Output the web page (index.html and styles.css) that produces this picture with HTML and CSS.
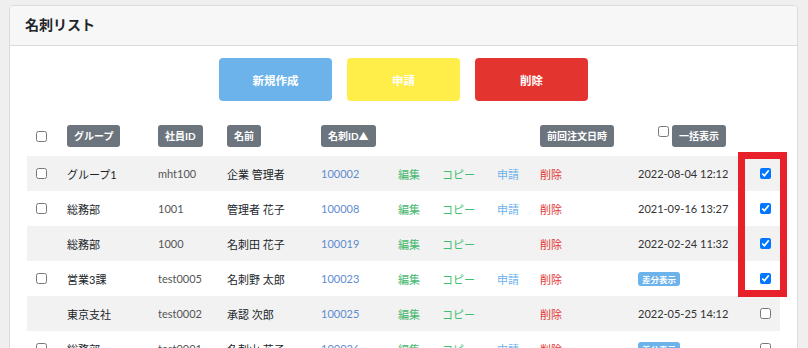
FILE: index.html
```html
<html>
    <head>
        <meta charset="utf-8">
        <link rel="stylesheet" href="styles.css">
    </head>
    <body>
        <section class="card">
            <div class="card-header">名刺リスト</div>
            <div class="card-body">
                <div class="actions">
                    <button class="btn btn-blue">新規作成</button>
                    <button class="btn btn-yellow">申請</button>
                    <button class="btn btn-red">削除</button>
                </div>

                <div class="list-wrap">
                    <table class="list">
                        <colgroup>
                            <col class="c-check">
                            <col class="c-group">
                            <col class="c-emp">
                            <col class="c-name">
                            <col class="c-id">
                            <col class="c-edit">
                            <col class="c-copy">
                            <col class="c-apply">
                            <col class="c-del">
                            <col class="c-date">
                            <col class="c-pick">
                        </colgroup>
                        <tr class="head">
                            <td><input type="checkbox" class="chk"></td>
                            <td><span class="tag">グループ</span></td>
                            <td><span class="tag">社員ID</span></td>
                            <td><span class="tag">名前</span></td>
                            <td><span class="tag">名刺ID▲</span></td>
                            <td></td>
                            <td></td>
                            <td></td>
                            <td><span class="tag">前回注文日時</span></td>
                            <td colspan="2" class="bulk"><input type="checkbox" class="chk"><span class="tag">一括表示</span></td>
                        </tr>
                        <tr class="row">
                            <td><input type="checkbox" class="chk"></td>
                            <td>グループ1</td>
                            <td class="emp">mht100</td>
                            <td>企業 管理者</td>
                            <td class="card-id">100002</td>
                            <td class="edit">編集</td>
                            <td class="copy">コピー</td>
                            <td class="apply">申請</td>
                            <td class="del">削除</td>
                            <td class="date">2022-08-04 12:12</td>
                            <td><input type="checkbox" class="chk" checked></td>
                        </tr>
                        <tr class="row">
                            <td><input type="checkbox" class="chk"></td>
                            <td>総務部</td>
                            <td class="emp">1001</td>
                            <td>管理者 花子</td>
                            <td class="card-id">100008</td>
                            <td class="edit">編集</td>
                            <td class="copy">コピー</td>
                            <td class="apply">申請</td>
                            <td class="del">削除</td>
                            <td class="date">2021-09-16 13:27</td>
                            <td><input type="checkbox" class="chk" checked></td>
                        </tr>
                        <tr class="row">
                            <td></td>
                            <td>総務部</td>
                            <td class="emp">1000</td>
                            <td>名刺田 花子</td>
                            <td class="card-id">100019</td>
                            <td class="edit">編集</td>
                            <td class="copy">コピー</td>
                            <td></td>
                            <td class="del">削除</td>
                            <td class="date">2022-02-24 11:32</td>
                            <td><input type="checkbox" class="chk" checked></td>
                        </tr>
                        <tr class="row">
                            <td><input type="checkbox" class="chk"></td>
                            <td>営業3課</td>
                            <td class="emp">test0005</td>
                            <td>名刺野 太郎</td>
                            <td class="card-id">100023</td>
                            <td class="edit">編集</td>
                            <td class="copy">コピー</td>
                            <td class="apply">申請</td>
                            <td class="del">削除</td>
                            <td class="date"><span class="diff">差分表示</span></td>
                            <td><input type="checkbox" class="chk" checked></td>
                        </tr>
                        <tr class="row">
                            <td></td>
                            <td>東京支社</td>
                            <td class="emp">test0002</td>
                            <td>承認 次郎</td>
                            <td class="card-id">100025</td>
                            <td class="edit">編集</td>
                            <td class="copy">コピー</td>
                            <td></td>
                            <td class="del">削除</td>
                            <td class="date">2022-05-25 14:12</td>
                            <td><input type="checkbox" class="chk"></td>
                        </tr>
                        <tr class="row">
                            <td><input type="checkbox" class="chk"></td>
                            <td>総務部</td>
                            <td class="emp">test0001</td>
                            <td>名刺山 花子</td>
                            <td class="card-id">100026</td>
                            <td class="edit">編集</td>
                            <td class="copy">コピー</td>
                            <td class="apply">申請</td>
                            <td class="del">削除</td>
                            <td class="date"><span class="diff">差分表示</span></td>
                            <td><input type="checkbox" class="chk"></td>
                        </tr>
                    </table>
                    <div class="highlight"></div>
                </div>
            </div>
        </section>
    </body>
</html>
```

FILE: styles.css
```css
* { box-sizing: border-box; }

html, body {
    margin: 0;
    padding: 0;
}

body {
    background: #efefef;
    padding: 5px 10px 0 9px;
    font-family: "Lato", "Noto Sans CJK JP", sans-serif;
    color: #212529;
    overflow: hidden;
}

.card {
    width: 789px;
    background: #fff;
    border: 1px solid #dcdcdc;
    border-radius: 4px;
    height: 400px;
}

.card-header {
    height: 40px;
    line-height: 38px;
    padding-left: 15px;
    background: #f7f7f7;
    border-bottom: 1px solid #dadada;
    font-size: 14px;
    font-weight: bold;
    border-radius: 4px 4px 0 0;
}

.card-body { padding: 12px 17px 0 17px; }

.actions {
    display: flex;
    justify-content: center;
    gap: 15px;
}

.btn {
    width: 113px;
    height: 43px;
    border: none;
    border-radius: 4px;
    color: #fff;
    font-family: inherit;
    font-size: 11.5px;
    font-weight: bold;
}
.btn-blue { background: #6cb2eb; }
.btn-yellow { background: #ffed4a; }
.btn-red { background: #e3342f; }

.list-wrap {
    position: relative;
    margin-top: 15px;
}

.list {
    width: 753px;
    table-layout: fixed;
    border-collapse: collapse;
    font-size: 11px;
}

.c-check { width: 40px; }
.c-group { width: 91px; }
.c-emp { width: 69px; }
.c-name { width: 94px; }
.c-id { width: 77px; }
.c-edit { width: 44px; }
.c-copy { width: 55px; }
.c-apply { width: 43px; }
.c-del { width: 98px; }
.c-date { width: 112px; }
.c-pick { width: 30px; }

.list td {
    padding: 0;
    white-space: nowrap;
    overflow: hidden;
}

.list tr.head td {
    height: 40px;
    vertical-align: middle;
}

.list tr.row td { height: 35px; }
.list tr.row:nth-child(even) { background: #f2f2f2; }

.chk {
    width: 11px;
    height: 11px;
    margin: 0 0 0 9px;
    vertical-align: middle;
}
.list td:last-child .chk { margin-left: 10px; }

.tag {
    display: inline-block;
    height: 22px;
    line-height: 22px;
    padding: 0 7px;
    background: #6c757d;
    color: #fff;
    border-radius: 3px;
    font-size: 10px;
    font-weight: bold;
    vertical-align: middle;
}

.bulk { padding-left: 10px !important; }
.bulk .chk { margin: 0 3px 0 9px; position: relative; top: -5px; }

.emp { color: #555; }
.card-id { color: #5f8ccf; }
.edit { color: #45b86c; }
.copy { color: #3fbf6f; }
.apply { color: #6cb2eb; }
.del { color: #e3342f; }
.date { color: #333; }

.diff {
    display: inline-block;
    padding: 1px 4px;
    background: #6cb2eb;
    color: #fff;
    font-size: 8.5px;
    font-weight: bold;
    border-radius: 3px;
}

.highlight {
    position: absolute;
    left: 711px;
    top: 36px;
    width: 49px;
    height: 145px;
    border: 7px solid #e8202a;
}
```
